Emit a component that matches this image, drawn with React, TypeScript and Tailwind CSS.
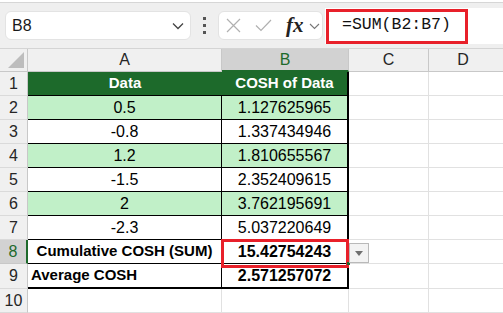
import React from "react";

const font = { fontFamily: '"Liberation Sans", Arial, sans-serif' };

const data: [string, string, boolean][] = [
  ["0.5", "1.127625965", true],
  ["-0.8", "1.337434946", false],
  ["1.2", "1.810655567", true],
  ["-1.5", "2.352409615", false],
  ["2", "3.762195691", true],
  ["-2.3", "5.037220649", false],
];

const RowNum = ({ n, active }: { n: number; active?: boolean }) => (
  <div
    className={
      active
        ? "w-[28px] h-full shrink-0 flex items-center justify-center bg-[#d2d2d2] text-[#1d6a2b] border-r-2 border-r-[#1d6a2b] border-b border-b-[#c8c8c8]"
        : "w-[28px] h-full shrink-0 flex items-center justify-center bg-[#f0f0f0] text-[#262626] border-r border-r-[#c8c8c8] border-b border-b-[#dadada]"
    }
  >
    {n}
  </div>
);

const EmptyCD = () => (
  <>
    <div className="w-[80px] h-full shrink-0 border-r border-b border-[#e1e1e1]" />
    <div className="flex-1 h-full border-b border-[#e1e1e1]" />
  </>
);

export default function App() {
  return (
    <div className="w-[503px] h-[313px] overflow-hidden bg-white relative text-[16px]" style={font}>
      {/* toolbar */}
      <div className="h-[49px] bg-[#efefef] border-b border-[#d4d4d4]">
        <div className="h-[3px] bg-white border-b border-[#d6d6d6]" />
        <div className="flex h-[45px] items-center">
          {/* name box */}
          <div className="ml-[5px] w-[186px] h-[29px] bg-white rounded-[6px] border border-[#e3e3e3] flex items-center justify-between pl-[6px] pr-[6px]">
            <span className="text-[16px] text-[#1a1a1a]">B8</span>
            <svg width="12" height="8" viewBox="0 0 12 8">
              <path d="M1 1.5 L6 6.5 L11 1.5" fill="none" stroke="#444" strokeWidth="1.3" />
            </svg>
          </div>
          {/* dots */}
          <div className="w-[27px] flex flex-col items-center gap-[4px]">
            <div className="w-[3px] h-[3px] bg-[#555]" />
            <div className="w-[3px] h-[3px] bg-[#555]" />
            <div className="w-[3px] h-[3px] bg-[#555]" />
          </div>
          {/* fx box */}
          <div className="w-[105px] h-[29px] bg-white rounded-[6px] border border-[#e3e3e3] flex items-center pl-[7px]">
            <svg width="15" height="15" viewBox="0 0 15 15">
              <path d="M1 1 L14 14 M14 1 L1 14" stroke="#b0b0b0" strokeWidth="1.2" fill="none" />
            </svg>
            <svg width="17" height="13" viewBox="0 0 17 13" className="ml-[14px]">
              <path d="M1 6.5 L6 11.5 L16 1" stroke="#b0b0b0" strokeWidth="1.2" fill="none" />
            </svg>
            <span
              className="ml-[14px] text-[21px] italic leading-none text-[#222] font-semibold"
              style={{ fontFamily: '"Liberation Serif", "Times New Roman", serif' }}
            >
              fx
            </span>
            <svg width="11" height="7" viewBox="0 0 11 7" className="ml-[5px] mt-[2px]">
              <path d="M1 1 L5.5 5.5 L10 1" fill="none" stroke="#777" strokeWidth="1.1" />
            </svg>
          </div>
          {/* formula bar */}
          <div className="ml-[2px] flex-1 h-[36px] bg-white flex items-center pl-[17px]">
            <span className="text-[16.5px] text-[#111]" style={{ fontFamily: '"Liberation Mono", "Courier New", monospace' }}>
              =SUM(B2:B7)
            </span>
          </div>
        </div>
      </div>

      {/* column headers */}
      <div className="flex h-[23px] bg-[#f0f0f0]">
        <div className="w-[28px] h-full shrink-0 border-r border-b border-[#c8c8c8] flex items-end justify-end p-[3px]">
          <svg width="16" height="16" viewBox="0 0 16 16">
            <path d="M16 0 L16 16 L0 16 Z" fill="#bdbdbd" />
          </svg>
        </div>
        <div className="w-[194px] h-full shrink-0 border-r border-b border-[#c8c8c8] flex items-center justify-center text-[#262626]">
          A
        </div>
        <div className="w-[127px] h-full shrink-0 bg-[#d2d2d2] border-r border-r-[#c8c8c8] border-b-2 border-b-[#1d6a2b] flex items-center justify-center text-[#1d6a2b]">
          B
        </div>
        <div className="w-[80px] h-full shrink-0 border-r border-b border-[#c8c8c8] flex items-center justify-center text-[#262626]">
          C
        </div>
        <div className="flex-1 h-full border-b border-[#c8c8c8] flex items-center justify-center text-[#262626] pr-[6px]">
          D
        </div>
      </div>

      {/* row 1 */}
      <div className="flex h-[24px]">
        <RowNum n={1} />
        <div className="w-[321px] h-full shrink-0 flex bg-[#1d6a2b] border-b border-r-2 border-black text-white font-bold text-[15px]">
          <div className="w-[194px] flex items-center justify-center">Data</div>
          <div className="flex-1 flex items-center justify-center">COSH of Data</div>
        </div>
        <EmptyCD />
      </div>

      {/* rows 2-7 */}
      {data.map(([a, b, green], i) => (
        <div key={i} className="flex h-[24px]">
          <RowNum n={i + 2} />
          <div
            className={`w-[194px] h-full shrink-0 border-r border-b border-black flex items-center justify-center ${green ? "bg-[#c1f0c8]" : "bg-white"}`}
          >
            {a}
          </div>
          <div
            className={`w-[127px] h-full shrink-0 border-r-2 border-b border-black flex items-center justify-center ${green ? "bg-[#c1f0c8]" : "bg-white"}`}
          >
            {b}
          </div>
          <EmptyCD />
        </div>
      ))}

      {/* row 8 */}
      <div className="flex h-[24px]">
        <RowNum n={8} active />
        <div className="w-[194px] h-full shrink-0 border-r border-b border-black flex items-center justify-center font-bold text-[15px]">
          Cumulative COSH (SUM)
        </div>
        <div className="w-[127px] h-full shrink-0 border-r-2 border-b border-black flex items-center justify-center font-bold">
          15.42754243
        </div>
        <EmptyCD />
      </div>

      {/* row 9 */}
      <div className="flex h-[25px]">
        <RowNum n={9} />
        <div className="w-[194px] h-full shrink-0 border-r border-b-2 border-black flex items-center pl-[3px] font-bold text-[15px]">
          Average COSH
        </div>
        <div className="w-[127px] h-full shrink-0 border-r-2 border-b-2 border-black flex items-center justify-center font-bold">
          2.571257072
        </div>
        <EmptyCD />
      </div>

      {/* row 10 */}
      <div className="flex h-[24px]">
        <RowNum n={10} />
        <div className="w-[194px] h-full shrink-0 border-r border-b border-[#e1e1e1]" />
        <div className="w-[127px] h-full shrink-0 border-r border-b border-[#e1e1e1]" />
        <EmptyCD />
      </div>

      {/* overlays */}
      <div className="absolute left-[326px] top-[9px] w-[142px] h-[35px] border-[3px] border-[#e8202a]" />
      <div className="absolute left-[221px] top-[239px] w-[128px] h-[29px] border-[3px] border-[#e8202a]" />
      <div className="absolute left-[347px] top-[262px] w-[3px] h-[3px] bg-[#1d6a2b]" />
      <div className="absolute left-[349px] top-[243px] w-[20px] h-[20px] bg-[#f3f3f3] border border-[#b9b9b9] flex items-center justify-center">
        <svg width="8" height="5" viewBox="0 0 8 5">
          <path d="M0 0 L8 0 L4 5 Z" fill="#6f6f6f" />
        </svg>
      </div>
    </div>
  );
}
